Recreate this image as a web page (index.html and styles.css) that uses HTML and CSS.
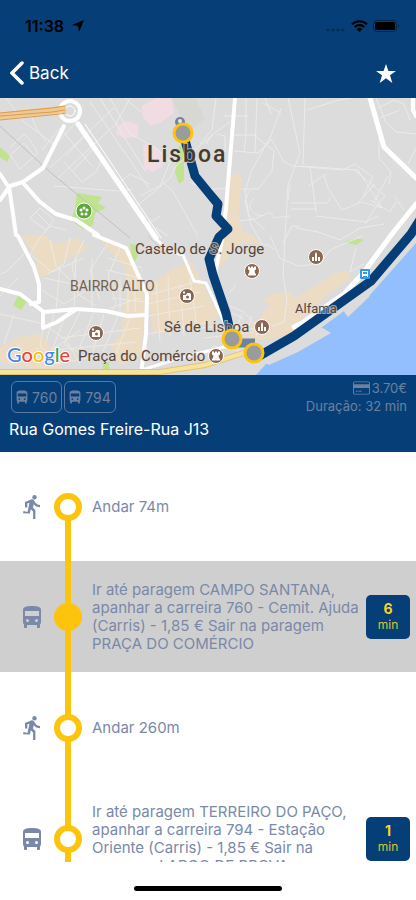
FILE: index.html
```
<!DOCTYPE html>
<html lang="pt">
<head>
    <meta charset="UTF-8">
    <meta name="viewport" content="width=device-width, initial-scale=1.0">
    <title>Rua Gomes Freire-Rua J13</title>
    <link rel="stylesheet" href="styles.css">
</head>
<body>
    <!-- shared icons -->
    <svg class="sprite" width="0" height="0">
        <symbol id="icon-bus" viewBox="0 0 20 22">
            <path fill-rule="evenodd" d="M1 4C1 1 4 0 10 0s9 1 9 4v12c0 1-.5 2-1 2.500V21c0 .6-.4 1-1 1h-1c-.6 0-1-.4-1-1v-2H5v2c0 .6-.4 1-1 1H3c-.6 0-1-.4-1-1v-2.500C1.500 18 1 17 1 16zM3 5v5h14V5zM5.500 13a1.500 1.500 0 1 0 0 3 1.500 1.500 0 0 0 0-3zm9 0a1.500 1.500 0 1 0 0 3 1.500 1.500 0 0 0 0-3z"/>
        </symbol>
        <symbol id="icon-run" viewBox="0 0 18 24">
            <circle cx="11.500" cy="2.200" r="2.200"/>
            <path d="M6.900 18.600l.9-4.300 2.300 2.200V24h2.300v-9l-2.400-2.300.7-3.500c1.500 1.800 3.800 3 6.300 3V9.900c-2.200 0-4-1.100-4.900-2.700l-1.100-1.900c-.4-.7-1.100-1.100-2-1.100-.3 0-.6.1-.9.200L2 7v5.400h2.300V8.500l2.100-.8-1.900 9.400L.5 16 0 18.300z"/>
        </symbol>
        <symbol id="icon-card" viewBox="0 0 18 14">
            <path fill-rule="evenodd" d="M2 0h14c1.100 0 2 .9 2 2v10c0 1.100-.9 2-2 2H2c-1.100 0-2-.9-2-2V2C0 .9.900 0 2 0zM1 3h16V2c0-.6-.4-1-1-1H2c-.6 0-1 .4-1 1zm0 4v5c0 .6.4 1 1 1h14c.6 0 1-.4 1-1V7zm2 3h2v1H3zm3 0h3v1H6z"/>
        </symbol>
    </svg>

    <header class="header">
        <div class="status-bar">
            <div class="status-time">
                <span>11:38</span>
                <svg width="12" height="12" viewBox="0 0 12 12"><path d="M12 0L7 12 6 6 0 5z"/></svg>
            </div>
            <div class="status-icons">
                <svg class="signal" width="20" height="12" viewBox="0 0 20 12">
                    <circle cx="2" cy="10" r="1.600"/><circle cx="7" cy="10" r="1.600"/><circle cx="12" cy="10" r="1.600"/><circle cx="17" cy="10" r="1.600"/>
                </svg>
                <svg width="17" height="12" viewBox="0 0 17 12">
                    <path d="M1 4.300a10.700 10.700 0 0 1 15 0M3.700 7a6.900 6.900 0 0 1 9.600 0" fill="none" stroke="#000" stroke-width="2.200"/>
                    <path d="M5.600 9.200a4.200 4.200 0 0 1 5.800 0L8.500 12z"/>
                </svg>
                <svg width="27" height="12" viewBox="0 0 27 12">
                    <rect x=".5" y=".5" width="23" height="11" rx="3" fill="none" stroke="#000" stroke-opacity=".4"/>
                    <rect x="2" y="2" width="20" height="8" rx="1.500"/>
                    <path d="M25 4c1.500.5 1.500 3.500 0 4z" opacity=".4"/>
                </svg>
            </div>
        </div>
        <nav class="nav-bar">
            <button class="nav-button" type="button">
                <svg width="14" height="24" viewBox="0 0 14 24"><path d="M12 2L2 12l10 10" fill="none" stroke="#fff" stroke-width="3.500" stroke-linecap="round"/></svg>
                <span>Back</span>
            </button>
            <button class="nav-button" type="button" aria-label="Favorito">
                <svg width="20" height="19" viewBox="0 0 20 19"><path fill="#fff" d="M10 0l2.400 7H20l-6 4.300L16.300 19 10 14.300 3.700 19 6 11.300 0 7h7.600z"/></svg>
            </button>
        </nav>
    </header>

    <main class="content">
        <svg class="map" viewBox="0 0 416 277" preserveAspectRatio="xMidYMid slice" role="img" aria-label="Mapa de Lisboa">
            <rect width="416" height="277" fill="#dcdcdc"/>

            <!-- built-up areas -->
            <g fill="#ecdcc4">
                <path d="M227 79l15-4-3 40 3 18 12 6 8 7-34-3-8-12 4-20z"/>
                <path d="M22 138h24l10 8 22-6 10 12-18 7-12 8-10 10-10 2-2-20z"/>
                <path d="M97 137l16 5 20 12 12 50-4 55-22 8-8-20 10-12 2-20 4-22-2-24-14-14z"/>
                <path d="M0 250l16-10 22-4 10 9 14 24-10 5-52-10z"/>
                <path d="M150 186l24-16 18-6 10 20 16 32-6 10-58 10-6-34z"/>
                <path d="M219 138h28l-18 20-10 14z"/>
                <path d="M271 196l18-2 6 6 20-12 18-12 14-4 4 8-20 14-28 24-12 18-20 5-22 0-3-13 14-8 10-14-8-4z"/>
            </g>
            <g fill="#bfe38f">
                <path d="M77 95l25 4-4 6 8 5-11 5-2 12-10 4-12-9 4-12z"/>
                <path d="M179 48c5-2 7 4 5 14v20l-5 4-4-12z"/>
                <path d="M0 49l10 9-3 6L0 59z"/>
                <path d="M18 198l9 5-6 9-8-5z"/>
                <path d="M130 146l7 1 1 10-5 10z"/>
                <path d="M344 144l12-4 8 2-8 5z"/>
                <path d="M103 265l6-1v10h-6z"/>
            </g>
            <g fill="#f1dce4">
                <path d="M142 8l14-8h16l2 15-14 10-9 3-9-10z"/>
                <path d="M118 27l10-4 10 4v12l-14 1-8-4z"/>
                <path d="M143 47l8-2 14 12-3 12-10 5-8-4z"/>
            </g>
            <path d="M171 0h24l10 20-16 14z" fill="#d7d8d1"/>

            <!-- side streets -->
            <g fill="none" stroke="#ebebeb" stroke-width="1">
                <path d="M10 50l14-14 6 6 8 13-18 16-10-14 14-12 10 12"/>
                <path d="M28 10l8 20 10 14M6 0l18 24 30 22M50 70l64-60M58 80l60-56M64 64l18 20 14-10 8-16M42 52l18-22 32 38M80 20L58 44M88 34L66 58M96 48L72 74"/>
                <path d="M90 4l40 58 20 30M100 0l46 74M110 0l20 36 26 14 14 14-10 24-20 10M125 0l16 14M116 26l14-26"/>
                <path d="M54 88l64 5 14-2M120 84l10-8 20 10M134 110l20-16 16-14 6-12 40-34 14-10M162 84l10 8 26 46M148 126l12-8M156 130l12 8"/>
                <path d="M30 120l10-10 14 12-8 10zM36 114l14 14M40 140l10-12 16 4M190 84l16 8 20-2"/>
                <path d="M216 0l-4 32-12 14M217 36l8 2v16M212 36l-6 10M246 0v38l-2 16M257 0l-2 54M224 18h24M234 37h20l20 16-2 20-14 18h-16M234 53l24 2 14-14M263 5l18 10M281 10l-10 28-6 10-14 26-6 20 4 24 16 14"/>
                <path d="M288 0l12 55-12 32-5 90M305 0l-2 66M265 0l6 16M307 12l32-10 12-2M272 42l12 22 9 4 50 4 12-6 18 13-10 20M300 68l58 4 24 38-20-6-20 8-14-22-4-12M310 68l6 46M326 76l-18 12M291 105h36l4-6M291 111h26M290 87l-2 15M355 72l30 26-10 12-10 16M375 86l-18 20M388 78l-14 26M370 102l20 12 6-10M394 98l10 14"/>
                <path d="M376 0l10 24 10 10 20 2M378 10l16-8 10 4 6 16M380 20l20-8M379 40v20l12 14-2 12M416 50l-8 16"/>
                <path d="M254 100c-8 8-4 16 8 18l8-4 4 6 16-2M249 93l-4 10 6 24 12 20M296 130l22 4 22 8 20-12 24-4M316 118l50 6 12-6M239 123l16-2 8-4M282 146l10-18 8 0M260 152l6-6 8 5"/>
                <path d="M283 176l4 26-3 22-12 4M270 138l10 22 18 8 22-2 10-14 32-14M356 150l-6 24 14-8M229 195l7-8M230 208l14 6 10 12M232 215l12 6M228 223l20 8 14 0M236 232l6-16M246 236l6-18M256 238l4-16"/>
            </g>
            <g fill="none" stroke="#eeeae2" stroke-width="1">
                <path d="M24 156l-18 18-6 2M40 140l-10 16 22 18 32-14M50 142l6 26 22 22 22-8M70 140l-6 26-16 10M84 142l-12 26 6 28 18 12M110 142l-20 30 10 30M120 150l-12 28 8 28-4 8M44 180l38 8 14-6M42 192l22 14 26-16M60 168l-4 44M76 160l-2 52M92 160v50"/>
                <path d="M108 160l34 10M106 172l36 8M114 190l30 3M112 200l32 4M120 180v34M128 180v34M135 180v34M110 210l30-10"/>
                <path d="M0 198l18-18M0 216l44 10 22 16 14 24M14 216l-10 30M44 226l-4 22 14 12M54 216l-8 28M66 216l-14 36 28-20M80 214l-16 32 20 12M94 214l-14 34 20 16M104 216l-12 40M118 218l-16 38M130 220l-16 40M56 252l80-8M60 240l80-10M36 250l20 16 54-10"/>
                <path d="M156 184l4 60M168 178l2 60M180 186l4 52M190 180l8 56M148 206l52-12M148 218l56-10M148 236l62-12M152 196l44-12M200 230l46-4M204 240l50-6M212 248l44 8"/>
            </g>
            <path d="M0 28l50 46 80 66" fill="none" stroke="#c0c0c0"/>
            <path d="M148 138l12 12M154 138l12 12" fill="none" stroke="#c8c8c8"/>

            <!-- avenues -->
            <g fill="none" stroke="#fff" stroke-linejoin="round" stroke-linecap="round">
                <path d="M64 28L43 70 23 84 10 88 0 102M8 88L0 76M9 88l7 49M24 86l16 18 16 12 20 6 22 15" stroke-width="4"/>
                <circle cx="70" cy="13" r="10" stroke-width="4"/>
                <circle cx="70" cy="13" r="5" stroke-width="1"/>
                <path d="M78 26l78 114" stroke-width="5"/>
                <path d="M85 26l76 114" stroke-width="1"/>
                <path d="M235 0l-9 110-4 32-8 38" stroke-width="4"/>
                <path d="M370 0l14 49 32 31" stroke-width="5"/>
                <path d="M413 0v12l3 6" stroke-width="4"/>
                <path d="M416 106l-24 30-28 38-20 22-42 29-8 4" stroke-width="5"/>
                <path d="M94 137l32 13 8 18 13 28-1 40-5 40" stroke-width="4"/>
                <path d="M18 138l16 31 5 17v18l-8 2M0 191l20 5 24 18 32-3 30 2 22 5 18-1M43 214v16l14-6 18-12" stroke-width="4"/>
                <path d="M155 140l14 13 14 4 11 26 12 2 24 52M212 182l17 48M142 272l38-12 44-11 26-3" stroke-width="3"/>
            </g>
            <path d="M0 18l66-7" fill="none" stroke="#efc993" stroke-width="7"/>
            <path d="M0 15l52-5 13-2M0 22l60-6 6-1M0 18l52-4 13-2" fill="none" stroke="#dc9c4e"/>
            <path d="M0 274h160l45-7 45-14" fill="none" stroke="#e3c56e" stroke-width="6"/>
            <path d="M0 274h160l45-7 45-14" fill="none" stroke="#f7e39c" stroke-width="4"/>

            <!-- river -->
            <path d="M416 145l-23 26-24 27-21 12-27 20-25 18-30 18-10 11h160z" fill="#93bffe"/>
            <path d="M371 194l-2 5-21 20-6-8zM321 229l10 6-33 19-3-7zM296 247l2 7-29 13-5-3z" fill="#dcdcdc"/>

            <!-- route -->
            <path d="M183 35l5 18 7 25 13 16 10 12-2 12 12 13-9 8-10 22 4 16 13 38 6 26" fill="none" stroke="#063f77" stroke-width="9" stroke-linejoin="round"/>
            <path d="M254 261l40-23 77-55 40-47 10-16" fill="none" stroke="#063f77" stroke-width="9" stroke-linejoin="round"/>
            <path d="M238 245h17" stroke="#71829e" stroke-width="9"/>
            <circle cx="180" cy="24" r="5" fill="#7482a0"/>
            <circle cx="180" cy="23" r="2" fill="#e4e7ee"/>
            <path d="M254 256v9" stroke="#063f77" stroke-width="3"/>

            <!-- points of interest -->
            <g stroke="#fff" stroke-width="1">
                <circle cx="84" cy="113" r="8" fill="#5fa73b"/>
                <circle cx="252" cy="173" r="7.500" fill="#8b6650"/>
                <circle cx="316" cy="159" r="7.500" fill="#8b6650"/>
                <circle cx="187" cy="198" r="7.500" fill="#8b6650"/>
                <circle cx="96" cy="235" r="7.500" fill="#8b6650"/>
                <circle cx="262" cy="229" r="7.500" fill="#8b6650"/>
                <circle cx="216" cy="258" r="7.500" fill="#8b6650"/>
            </g>
            <g fill="#fff">
                <circle cx="84" cy="110" r="1.500"/>
                <circle cx="87" cy="112" r="1.500"/>
                <circle cx="86" cy="116" r="1.500"/>
                <circle cx="82" cy="116" r="1.500"/>
                <circle cx="81" cy="112" r="1.500"/>
                <path id="poi-rook" d="M248 168.500h2v1.200h1v-1.200h2v1.200h1v-1.200h2v3l-1.500 1 .5 2.500 1 1v1.500h-8V176l1-1 .5-2.500-1.500-1z"/>
                <use href="#poi-rook" x="-36" y="85"/>
                <path id="poi-hall" d="M312 159h2v4h-2zM315 156l1-2 1 2v7h-2zM318 159h2v4h-2z"/>
                <use href="#poi-hall" x="-54" y="70"/>
                <path id="poi-photo" fill-rule="evenodd" d="M183 197h3l1-2h3l1 1v6h-8zm4.500.5a1.500 1.500 0 1 0 0 3 1.500 1.500 0 0 0 0-3zM183 193.500h2v2h-2z"/>
                <use href="#poi-photo" x="-91" y="37"/>
            </g>
            <rect x="360" y="171" width="10" height="10" rx="1" fill="#2f9bea"/>
            <path d="M362 173h6v6h-1v-1h-4v1h-1zM363 174v2h4v-2z" fill="#fff" fill-rule="evenodd"/>

            <!-- labels -->
            <g class="map-labels">
                <text class="map-city" x="147" y="64">Lisboa</text>
                <text x="135" y="156">Castelo de S. Jorge</text>
                <text class="map-district" x="70" y="193">BAIRRO ALTO</text>
                <text x="164" y="234">Sé de Lisboa</text>
                <text class="map-quarter" x="295" y="215">Alfama</text>
                <text x="78" y="263">Praça do Comércio</text>
                <text class="map-logo" x="7" y="264"><tspan fill="#4285f4">G</tspan><tspan fill="#ea4335">o</tspan><tspan fill="#fbbc05">o</tspan><tspan fill="#4285f4">g</tspan><tspan fill="#34a853">l</tspan><tspan fill="#ea4335">e</tspan></text>
            </g>

            <!-- stops -->
            <g fill="#9a9b9c" stroke="#fcc40d" stroke-width="3">
                <circle cx="183" cy="35" r="9"/>
                <circle cx="232" cy="241" r="9"/>
                <circle cx="254" cy="255" r="9"/>
            </g>
        </svg>

        <section class="summary">
            <div class="summary-top">
                <div class="lines">
                    <span class="line"><svg width="12" height="14"><use href="#icon-bus"/></svg>760</span>
                    <span class="line"><svg width="12" height="14"><use href="#icon-bus"/></svg>794</span>
                </div>
                <div class="totals">
                    <div class="price"><svg width="17" height="14"><use href="#icon-card"/></svg>3.70€</div>
                    <div>Duração: 32 min</div>
                </div>
            </div>
            <h1 class="title">Rua Gomes Freire-Rua J13</h1>
        </section>

        <ol class="steps">
            <li class="step step-first">
                <svg class="step-icon" width="20" height="24"><use href="#icon-run"/></svg>
                <span class="track"><span class="dot"></span></span>
                <p class="step-text">Andar 74m</p>
            </li>
            <li class="step step-active">
                <svg class="step-icon" width="20" height="22"><use href="#icon-bus"/></svg>
                <span class="track"><span class="dot"></span></span>
                <p class="step-text">Ir até paragem CAMPO SANTANA, apanhar a carreira 760 - Cemit. Ajuda (Carris) - 1,85 € Sair na paragem PRAÇA DO COMÉRCIO</p>
                <span class="badge"><strong>6</strong>min</span>
            </li>
            <li class="step">
                <svg class="step-icon" width="20" height="24"><use href="#icon-run"/></svg>
                <span class="track"><span class="dot"></span></span>
                <p class="step-text">Andar 260m</p>
            </li>
            <li class="step">
                <svg class="step-icon" width="20" height="22"><use href="#icon-bus"/></svg>
                <span class="track"><span class="dot"></span></span>
                <p class="step-text">Ir até paragem TERREIRO DO PAÇO, apanhar a carreira 794 - Estação Oriente (Carris) - 1,85 € Sair na paragem LARGO DE PROVA</p>
                <span class="badge"><strong>1</strong>min</span>
            </li>
        </ol>
    </main>

    <footer class="home-bar"><span class="home-indicator"></span></footer>
</body>
</html>
```

FILE: styles.css
```
* {
    box-sizing: border-box;
}

body {
    margin: 0;
    height: 100vh;
    display: flex;
    flex-direction: column;
    overflow: hidden;
    background-color: #fff;
    color: #7a89a9;
    font-family: Inter, Roboto, "Liberation Sans", sans-serif;
    font-size: 15px;
}

.sprite {
    position: absolute;
}

svg {
    flex-shrink: 0;
    fill: currentColor;
}

/* header */
.header {
    background-color: #063f77;
    color: #fff;
}

.status-bar {
    display: flex;
    justify-content: space-between;
    align-items: center;
    height: 48px;
    padding: 4px 16px 0 25px;
    color: #000;
    font-size: 16px;
    font-weight: 600;
}

.status-time,
.status-icons {
    display: flex;
    align-items: center;
    gap: 5px;
}

.status-time {
    gap: 8px;
}

.signal {
    opacity: 0.3;
}

.nav-bar {
    display: flex;
    justify-content: space-between;
    align-items: center;
    height: 50px;
    padding: 0 20px 0 10px;
}

.nav-button {
    display: flex;
    align-items: center;
    gap: 5px;
    padding: 0;
    border: none;
    background: none;
    color: #fff;
    font-family: inherit;
    font-size: 17px;
    cursor: pointer;
}

/* map */
.content {
    flex: 1;
    min-height: 0;
    display: flex;
    flex-direction: column;
    overflow: hidden;
}

.map {
    display: block;
    width: 100%;
    height: 277px;
}

.map-labels {
    fill: #5b4436;
    stroke: #dedcd8;
    stroke-width: 2px;
    stroke-opacity: 0.7;
    paint-order: stroke;
    font-family: Roboto, sans-serif;
    font-size: 15px;
}

.map-city {
    fill: #453a2b;
    font-size: 23px;
    font-weight: 500;
    letter-spacing: 2px;
}

.map-district {
    fill: #75604f;
    font-size: 14px;
}

.map-quarter {
    font-size: 13px;
}

.map-logo {
    stroke: #fff;
    stroke-opacity: 1;
    font-family: Lato, sans-serif;
    font-size: 20px;
    font-weight: 500;
}

/* summary */
.summary {
    flex-shrink: 0;
    padding: 4px 9px 12px;
    background-color: #063f77;
    color: #6d809f;
    font-size: 13px;
}

.summary-top {
    display: flex;
    justify-content: space-between;
}

.lines {
    display: flex;
    gap: 2px;
    padding: 2px;
}

.line {
    display: flex;
    align-items: center;
    gap: 4px;
    height: 32px;
    padding: 0 4px;
    border: 1px solid #5c7a9e;
    border-radius: 6px;
    font-size: 14px;
}

.totals {
    line-height: 18px;
    text-align: right;
}

.price {
    display: flex;
    justify-content: flex-end;
    align-items: center;
    gap: 2px;
}

.title {
    margin: 4px 0 0;
    color: #fff;
    font-size: 16px;
    font-weight: 400;
    line-height: 21px;
}

/* steps */
.steps {
    flex: 1;
    min-height: 0;
    margin: 0;
    padding: 0;
    overflow: hidden;
    list-style: none;
}

.step {
    display: grid;
    grid-template-columns: 24px 42px 1fr 44px;
    column-gap: 3px;
    align-items: center;
    height: 111px;
    padding: 0 6px 0 20px;
}

.step-first {
    height: 109px;
}

.step-active {
    background-color: #cfcfcf;
}

.step-icon {
    justify-self: center;
}

.track {
    display: flex;
    align-items: center;
    justify-content: center;
    height: 100%;
    background: linear-gradient(#fcc40d, #fcc40d) center / 6px 100% no-repeat;
}

.step-first .track {
    background-size: 6px 50%;
    background-position: bottom;
}

.dot {
    width: 28px;
    height: 28px;
    border: 6px solid #fcc40d;
    border-radius: 50%;
    background-color: #fff;
}

.step-active .dot {
    background-color: #fcc40d;
}

.step-text {
    margin: 0;
    line-height: 18px;
}

.badge {
    display: flex;
    flex-direction: column;
    align-items: center;
    justify-content: center;
    height: 44px;
    border-radius: 5px;
    background-color: #063f77;
    color: #d8c632;
    font-size: 12px;
    line-height: 16px;
}

.badge strong {
    color: #fcd41d;
    font-size: 14px;
}

/* home indicator */
.home-bar {
    display: flex;
    justify-content: center;
    align-items: center;
    height: 38px;
    padding-top: 14px;
}

.home-indicator {
    width: 148px;
    height: 5px;
    border-radius: 3px;
    background-color: #000;
}
```
